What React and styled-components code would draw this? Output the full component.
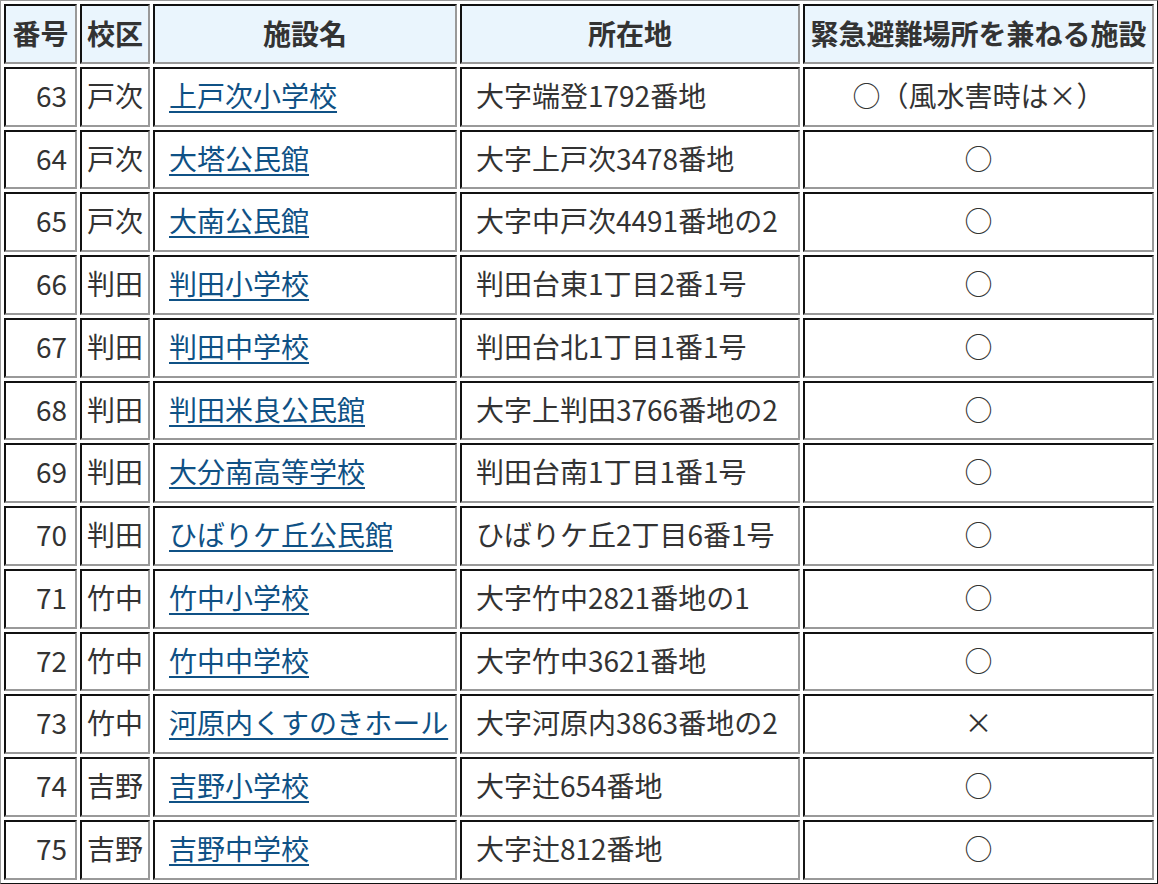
import React from "react";
import styled, { createGlobalStyle } from "styled-components";

const GlobalStyle = createGlobalStyle`
  html, body {
    margin: 0;
    padding: 0;
    background: #fff;
  }
  body {
    font-family: "Noto Sans CJK JP", "Noto Sans", sans-serif;
    color: #333;
  }
`;

const Table = styled.table`
  width: 1158px;
  table-layout: fixed;
  border-collapse: separate;
  border-spacing: 3px;
  border: 1px solid;
  border-color: #999 #111 #111 #999;
  font-size: 28px;
  line-height: 39.75px;
`;

const HeadCell = styled.th`
  box-sizing: border-box;
  width: ${(p) => p.w}px;
  padding: 8px 4px;
  background-color: #eaf5fd;
  color: #333;
  font-weight: bold;
  text-align: center;
  white-space: nowrap;
  border: 2px solid;
  border-color: #111 #999 #999 #111;
`;

const Cell = styled.td`
  box-sizing: border-box;
  padding: 7px ${(p) => (p.align === "right" ? "8px" : "4px")} 9px
    ${(p) => (p.indent ? "14px" : "4px")};
  text-align: ${(p) => p.align || "left"};
  white-space: nowrap;
  border: 2px solid;
  border-color: #111 #999 #999 #111;
`;

const FacilityLink = styled.a`
  color: #0f5185;
  text-decoration: underline;
  text-underline-offset: 4px;
  text-decoration-thickness: 2px;
`;

const columns = [
  { label: "番号", w: 73 },
  { label: "校区", w: 70 },
  { label: "施設名", w: 304 },
  { label: "所在地", w: 340 },
  { label: "緊急避難場所を兼ねる施設", w: 351 }
];

const rows = [
  ["63", "戸次", "上戸次小学校", "大字端登1792番地", "○（風水害時は×）"],
  ["64", "戸次", "大塔公民館", "大字上戸次3478番地", "○"],
  ["65", "戸次", "大南公民館", "大字中戸次4491番地の2", "○"],
  ["66", "判田", "判田小学校", "判田台東1丁目2番1号", "○"],
  ["67", "判田", "判田中学校", "判田台北1丁目1番1号", "○"],
  ["68", "判田", "判田米良公民館", "大字上判田3766番地の2", "○"],
  ["69", "判田", "大分南高等学校", "判田台南1丁目1番1号", "○"],
  ["70", "判田", "ひばりケ丘公民館", "ひばりケ丘2丁目6番1号", "○"],
  ["71", "竹中", "竹中小学校", "大字竹中2821番地の1", "○"],
  ["72", "竹中", "竹中中学校", "大字竹中3621番地", "○"],
  ["73", "竹中", "河原内くすのきホール", "大字河原内3863番地の2", "×"],
  ["74", "吉野", "吉野小学校", "大字辻654番地", "○"],
  ["75", "吉野", "吉野中学校", "大字辻812番地", "○"]
];

export default function App() {
  return (
    <>
      <GlobalStyle />
      <Table>
        <thead>
          <tr>
            {columns.map((c) => (
              <HeadCell key={c.label} w={c.w}>
                {c.label}
              </HeadCell>
            ))}
          </tr>
        </thead>
        <tbody>
          {rows.map(([no, area, name, addr, shelter]) => (
            <tr key={no}>
              <Cell align="right">{no}</Cell>
              <Cell align="center">{area}</Cell>
              <Cell indent>
                <FacilityLink href="#">{name}</FacilityLink>
              </Cell>
              <Cell indent>{addr}</Cell>
              <Cell align="center">{shelter}</Cell>
            </tr>
          ))}
        </tbody>
      </Table>
    </>
  );
}
